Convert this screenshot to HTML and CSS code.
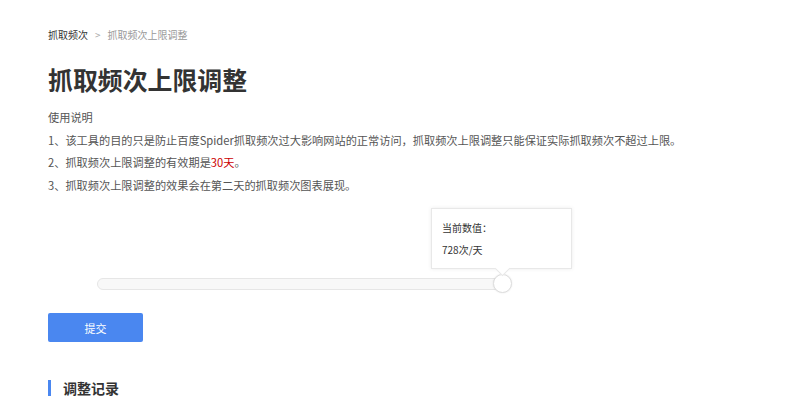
FILE: index.html
```html
<!DOCTYPE html>
<html lang="zh-CN">
<head>
    <meta charset="UTF-8">
    <title>抓取频次上限调整</title>
    <link rel="stylesheet" href="styles.css">
</head>
<body>
    <div class="page">
        <div class="crumbs">
            <a class="crumb-link">抓取频次</a>
            <span class="crumb-sep">&gt;</span>
            <span class="crumb-current">抓取频次上限调整</span>
        </div>

        <h1 class="title">抓取频次上限调整</h1>

        <div class="intro">
            <p>使用说明</p>
            <p>1、该工具的目的只是防止百度Spider抓取频次过大影响网站的正常访问，抓取频次上限调整只能保证实际抓取频次不超过上限。</p>
            <p>2、抓取频次上限调整的有效期是<span class="red">30天</span>。</p>
            <p>3、抓取频次上限调整的效果会在第二天的抓取频次图表展现。</p>
        </div>

        <div class="slider-area">
            <div class="slider">
                <div class="track"></div>
                <div class="thumb"></div>
                <div class="tip">
                    <p>当前数值：</p>
                    <p>728次/天</p>
                </div>
            </div>
        </div>

        <button class="submit-btn">提交</button>

        <h3 class="section-title">调整记录</h3>
    </div>
</body>
</html>
```

FILE: styles.css
```css
body {
    margin: 0;
    background-color: #fff;
    font-family: "Noto Sans CJK SC", "Liberation Sans", sans-serif;
    color: #333;
}

.page {
    padding: 26px 48px 0;
}

.crumbs {
    display: flex;
    align-items: center;
    gap: 7px;
    font-size: 10px;
    line-height: 18px;
}

.crumb-link {
    color: #333;
}

.crumb-sep {
    color: #aaa;
    font-size: 10px;
}

.crumb-current {
    color: #999;
}

.title {
    margin: 17px 0 0;
    font-size: 24.9px;
    line-height: 36px;
    font-weight: bold;
    color: #333;
}

.intro {
    margin-top: 9px;
    font-size: 11.2px;
    color: #555;
}

.intro p {
    margin: 0;
    line-height: 22.6px;
}

.red {
    color: #c00;
}

.slider-area {
    padding: 82px 0 0 49px;
}

.slider {
    position: relative;
    width: 414px;
    height: 12px;
}

.track {
    height: 10px;
    border: 1px solid #e6e6e6;
    border-radius: 6px;
    background-color: #f8f8f8;
}

.thumb {
    position: absolute;
    left: 396px;
    top: -4px;
    width: 17px;
    height: 17px;
    border: 1px solid #ddd;
    border-radius: 50%;
    background-color: #fff;
    box-shadow: 0 0 2px rgba(0, 0, 0, 0.1);
}

.tip {
    position: absolute;
    left: 334px;
    bottom: 21px;
    width: 117px;
    padding: 8px 12px 7px 10px;
    background-color: #fff;
    border: 1px solid #e8e8e8;
    box-shadow: 0 0 4px rgba(0, 0, 0, 0.08);
    font-size: 10px;
    color: #333;
}

.tip p {
    margin: 0;
    line-height: 22px;
}

.tip::after {
    content: "";
    position: absolute;
    left: 65px;
    bottom: -6px;
    width: 10px;
    height: 10px;
    background-color: #fff;
    border-right: 1px solid #e8e8e8;
    border-bottom: 1px solid #e8e8e8;
    transform: rotate(45deg);
}

.submit-btn {
    display: block;
    margin-top: 23px;
    width: 95px;
    height: 29px;
    border: none;
    border-radius: 2px;
    background-color: #4a87f0;
    color: #fff;
    font-family: inherit;
    font-size: 11px;
    cursor: pointer;
}

.section-title {
    margin: 38px 0 0;
    padding-left: 12px;
    border-left: 3px solid #4a87f0;
    font-size: 14px;
    line-height: 16px;
    font-weight: bold;
    color: #333;
}
```
